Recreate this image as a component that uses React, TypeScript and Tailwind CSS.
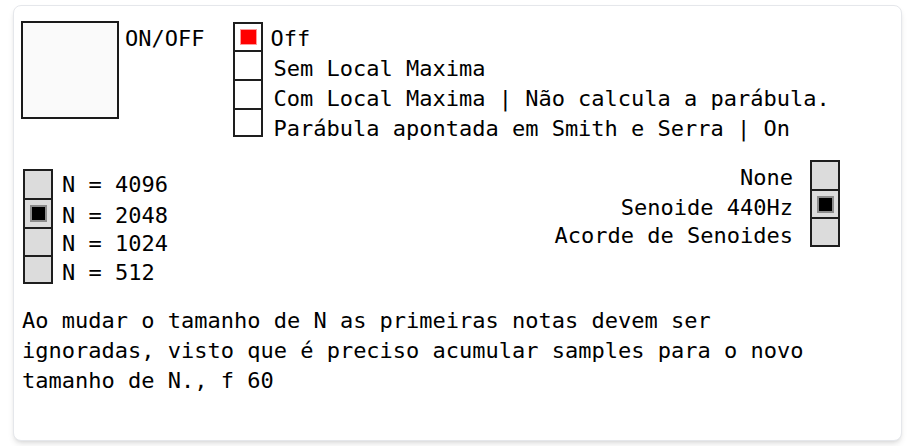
import React from 'react';

const mono = { fontFamily: '"DejaVu Sans Mono", monospace' };

// heights include the 2px divider on every cell but the first
function Cell({ h, bg, first, children }: { h: string; bg: string; first?: boolean; children?: React.ReactNode }) {
  return (
    <div className={`${h} ${bg} ${first ? '' : 'border-t-2 border-[#1e1e1e]'} flex items-center justify-center`}>
      {children}
    </div>
  );
}

function BlackDot() {
  return <div className="w-[17px] h-[17px] bg-black border-2 border-[#8c8c8c]" />;
}

export default function App() {
  return (
    <div className="w-[915px] h-[446px] bg-white overflow-hidden">
      <div
        className="ml-[13px] mt-[5px] w-[889px] h-[436px] rounded-lg border border-gray-200 bg-white shadow-md pl-[7px] pt-[15px] text-[22px] text-black"
        style={mono}
      >
        {/* top row */}
        <div className="flex items-start">
          <div className="w-[98px] h-[98px] border-2 border-[#1a1a1a] bg-[#fafafa]" />
          <div className="ml-[6px] mt-[3px] leading-[30px]">ON/OFF</div>

          <div className="ml-[29px] mt-[1px] w-[30px] border-2 border-[#1e1e1e] flex flex-col">
            <Cell h="h-[26px]" bg="bg-white" first>
              <div className="w-[17px] h-[16px] bg-[#ff0000] border border-[#ff9a9a]" />
            </Cell>
            <Cell h="h-[29px]" bg="bg-white" />
            <Cell h="h-[29px]" bg="bg-white" />
            <Cell h="h-[27px]" bg="bg-white" />
          </div>
          <div className="ml-[10px] mt-[3px] leading-[30px] whitespace-nowrap">
            <div className="-ml-[3px]">Off</div>
            <div>Sem Local Maxima</div>
            <div>Com Local Maxima | Não calcula a parábula.</div>
            <div>Parábula apontada em Smith e Serra | On</div>
          </div>
        </div>

        {/* second row */}
        <div className="mt-[16px] flex items-start justify-between">
          <div className="ml-[2px] mt-[9px] flex items-start">
            <div className="w-[30px] border-2 border-[#1e1e1e] flex flex-col">
              <Cell h="h-[27px]" bg="bg-[#dcdcdc]" first />
              <Cell h="h-[29px]" bg="bg-[#dcdcdc]">
                <BlackDot />
              </Cell>
              <Cell h="h-[28px]" bg="bg-[#dcdcdc]" />
              <Cell h="h-[27px]" bg="bg-[#dcdcdc]" />
            </div>
            <div className="ml-[9px] mt-[2px] leading-[28px] whitespace-nowrap">
              <div className="h-[31px]">N = 4096</div>
              <div className="h-[28px]">N = 2048</div>
              <div className="h-[29px]">N = 1024</div>
              <div className="h-[28px]">N = 512</div>
            </div>
          </div>

          <div className="mr-[61px] flex items-start">
            <div className="mt-[4px] leading-[28px] text-right whitespace-nowrap">
              <div className="h-[30px]">None</div>
              <div className="h-[28px]">Senoide 440Hz</div>
              <div className="h-[28px]">Acorde de Senoides</div>
            </div>
            <div className="ml-[17px] w-[30px] border-2 border-[#1e1e1e] flex flex-col">
              <Cell h="h-[27px]" bg="bg-[#dcdcdc]" first />
              <Cell h="h-[28px]" bg="bg-[#dcdcdc]">
                <BlackDot />
              </Cell>
              <Cell h="h-[28px]" bg="bg-[#dcdcdc]" />
            </div>
          </div>
        </div>

        <p className="ml-[1px] mt-[19px] w-[810px] leading-[30px]">
          Ao mudar o tamanho de N as primeiras notas devem ser ignoradas, visto que é preciso acumular samples para o
          novo tamanho de N., f 60
        </p>
      </div>
    </div>
  );
}
